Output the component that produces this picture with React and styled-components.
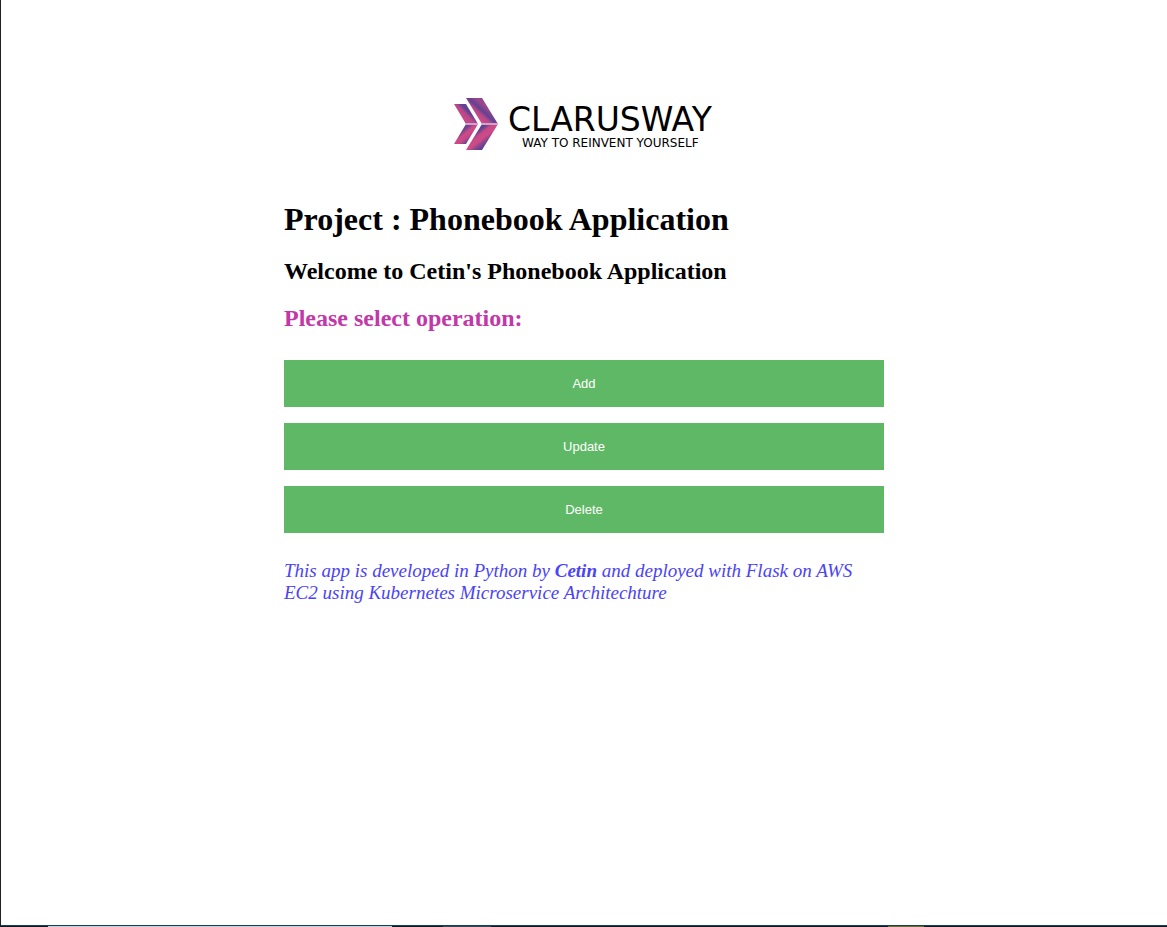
import React from "react";
import styled, { createGlobalStyle } from "styled-components";

const GlobalStyle = createGlobalStyle`
  *, *::before, *::after { box-sizing: border-box; }
  body {
    margin: 0;
    background: #ffffff;
    color: #000000;
    font-family: "Liberation Serif", "Times New Roman", serif;
  }
`;

const Page = styled.div`
  min-height: 100vh;
  display: flex;
  flex-direction: column;
  border-left: 1px solid #241f24;
`;

const Content = styled.main`
  flex: 1;
  width: 100%;
  max-width: 600px;
  margin: 0 auto;
  padding-top: 96px;
`;

const Logo = styled.svg`
  display: block;
  width: 264px;
  height: 56px;
  margin: 0 auto 48px;
`;

const Wordmark = styled.text`
  font-family: "DejaVu Sans", Verdana, sans-serif;
  font-size: ${(p) => p.$size}px;
  fill: #000000;
`;

const Title = styled.h1`
  margin: 0 0 20px;
  font-size: 32px;
  line-height: 38px;
`;

const Subtitle = styled.h2`
  margin: 0 0 20px;
  font-size: 24px;
  line-height: 27px;
  color: ${(p) => p.$color || "inherit"};
`;

const Operations = styled.form`
  display: flex;
  flex-direction: column;
  gap: 16px;
  margin: 28px 0 27px;
`;

const OperationButton = styled.button`
  width: 100%;
  padding: 16px 20px;
  border: none;
  background: #5fb865;
  color: #ffffff;
  font-family: "Liberation Sans", Arial, sans-serif;
  font-size: 13px;
  line-height: 15px;
  cursor: pointer;
`;

const Credits = styled.p`
  margin: 0;
  font-size: 19px;
  line-height: 22px;
  font-style: italic;
  color: #4a43fa;
`;

const BottomEdge = styled.div`
  display: flex;
  height: 2px;
  border-top: 1px solid #17405e;
`;

const Segment = styled.span`
  flex: ${(p) => p.$share} 1 0;
  background: ${(p) => p.$color};
`;

const segments = [
  [47, "#14171b"],
  [344, "#c3ced6"],
  [51, "#101820"],
  [48, "#3b4650"],
  [397, "#141821"],
  [36, "#6f6a2c"],
  [243, "#141821"],
];

function ClaruswayLogo() {
  return (
    <Logo viewBox="0 0 264 56" role="img" aria-label="Clarusway, way to reinvent yourself">
      <defs>
        <linearGradient id="smallTop" gradientUnits="userSpaceOnUse" x1="7" y1="26" x2="21" y2="12">
          <stop offset="0" stopColor="#5f4291" />
          <stop offset="0.3" stopColor="#c94a86" />
          <stop offset="0.52" stopColor="#b9478a" />
          <stop offset="0.72" stopColor="#5c4192" />
          <stop offset="1" stopColor="#6d4391" />
        </linearGradient>
        <linearGradient id="smallBottom" gradientUnits="userSpaceOnUse" x1="8" y1="31" x2="19" y2="44">
          <stop offset="0" stopColor="#5a4192" />
          <stop offset="0.28" stopColor="#74438f" />
          <stop offset="0.5" stopColor="#d04a87" />
          <stop offset="0.72" stopColor="#c44888" />
          <stop offset="1" stopColor="#594192" />
        </linearGradient>
        <linearGradient id="largeTop" gradientUnits="userSpaceOnUse" x1="20" y1="25" x2="37" y2="6">
          <stop offset="0" stopColor="#86458f" />
          <stop offset="0.22" stopColor="#cf4a86" />
          <stop offset="0.42" stopColor="#b9478a" />
          <stop offset="0.56" stopColor="#5f4291" />
          <stop offset="0.8" stopColor="#a2478c" />
          <stop offset="1" stopColor="#62428f" />
        </linearGradient>
        <linearGradient id="largeBottom" gradientUnits="userSpaceOnUse" x1="22" y1="31" x2="36" y2="49">
          <stop offset="0" stopColor="#5a4192" />
          <stop offset="0.25" stopColor="#61428f" />
          <stop offset="0.42" stopColor="#c84987" />
          <stop offset="0.62" stopColor="#d04a87" />
          <stop offset="0.82" stopColor="#7c4490" />
          <stop offset="1" stopColor="#504092" />
        </linearGradient>
      </defs>
      <path d="M2 8h12l12 20H14z" fill="url(#smallTop)" />
      <path d="M14 28h12L14 48H2z" fill="url(#smallBottom)" />
      <path d="M14 2h16l16 26H30z" fill="url(#largeTop)" />
      <path d="M30 28h16L30 54H14z" fill="url(#largeBottom)" />
      <path d="M14 28h12M30 28h16" stroke="#cfa3cb" strokeWidth="2" />
      <Wordmark x="56" y="35" $size={33}>CLARUSWAY</Wordmark>
      <Wordmark x="70" y="51" $size={12}>WAY TO REINVENT YOURSELF</Wordmark>
    </Logo>
  );
}

export default function App() {
  return (
    <>
      <GlobalStyle />
      <Page>
        <Content>
          <ClaruswayLogo />
          <Title>Project : Phonebook Application</Title>
          <Subtitle>Welcome to Cetin's Phonebook Application</Subtitle>
          <Subtitle $color="#c238a8">Please select operation:</Subtitle>
          <Operations onSubmit={(e) => e.preventDefault()}>
            {["Add", "Update", "Delete"].map((name) => (
              <OperationButton key={name}>{name}</OperationButton>
            ))}
          </Operations>
          <Credits>
            This app is developed in Python by <strong>Cetin</strong> and deployed with Flask on AWS EC2
            using Kubernetes Microservice Architechture
          </Credits>
        </Content>
        <BottomEdge aria-hidden="true">
          {segments.map(([share, color], i) => (
            <Segment key={i} $share={share} $color={color} />
          ))}
        </BottomEdge>
      </Page>
    </>
  );
}
